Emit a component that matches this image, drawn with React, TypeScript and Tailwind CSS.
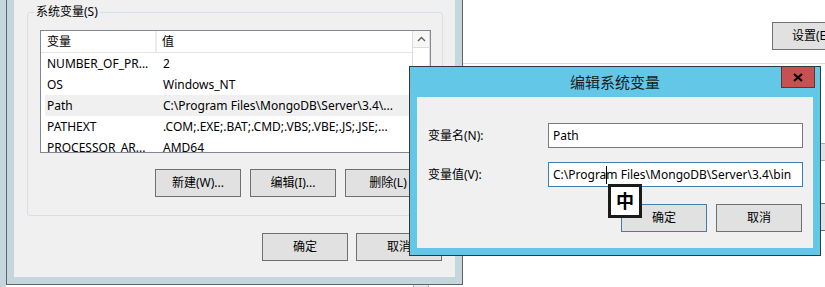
const font = "font-['Noto_Sans','Noto_Sans_CJK_SC',sans-serif]";

const rows = [
  { name: "NUMBER_OF_PR...", value: "2" },
  { name: "OS", value: "Windows_NT" },
  { name: "Path", value: "C:\\Program Files\\MongoDB\\Server\\3.4\\...", selected: true },
  { name: "PATHEXT", value: ".COM;.EXE;.BAT;.CMD;.VBS;.VBE;.JS;.JSE;..." },
  { name: "PROCESSOR_AR...", value: "AMD64" },
];

function WinButton({ label, primary }: { label: string; primary?: boolean }) {
  return (
    <div
      className={`flex h-[28px] w-[86px] shrink-0 items-center justify-center border bg-[#e1e1e1] text-[12px] text-black ${
        primary ? "border-[#3c7fb1]" : "border-[#707070]"
      }`}
    >
      {label}
    </div>
  );
}

function EnvList() {
  return (
    <div className="flex h-[123px] border border-[#828790] bg-white overflow-hidden">
      <div className="flex flex-1 flex-col">
        <div className="flex h-[22px] shrink-0 border-b border-[#e5e5e5]">
          <div className="flex w-[116px] items-center border-r-2 border-[#ececec] pl-[6px]">变量</div>
          <div className="flex items-center pl-[5px]">值</div>
        </div>
        {rows.map((r) => (
          <div key={r.name} className="flex h-[21px] shrink-0 pl-[4px]">
            <div className={`flex flex-1 items-center ${r.selected ? "bg-[#f0f0f0]" : ""}`}>
              <div className="w-[118px] shrink-0 pl-[2px] whitespace-nowrap">{r.name}</div>
              <div className="whitespace-nowrap">{r.value}</div>
            </div>
          </div>
        ))}
      </div>
      <div className="flex w-[18px] shrink-0 flex-col border-l border-[#dcdcdc] border-r border-r-[#dcdcdc] bg-white">
        <div className="flex h-[17px] items-center justify-center border-b border-[#dcdcdc] bg-[#f7f7f7]">
          <svg width="9" height="6" viewBox="0 0 9 6">
            <polyline points="1,5 4.5,1.5 8,5" fill="none" stroke="#606060" strokeWidth="1.4" />
          </svg>
        </div>
      </div>
    </div>
  );
}

function EnvWindow() {
  return (
    <div className="absolute left-[6px] top-[-16px] h-[301px] w-[457px] border border-[#5f6468] bg-[#c6d6dd] p-[7px]">
      <div className="flex h-full flex-col bg-[#f0f0f0] pl-[13px] pr-[12px]">
        <div className="relative mt-[20px] flex h-[204px] flex-col rounded-[3px] border border-[#d5dfe5] pl-[12px] pr-[11px] pt-[17px]">
          <span className="absolute left-[6px] top-[-9px] bg-[#f0f0f0] px-[2px] leading-[16px]">系统变量(S)</span>
          <EnvList />
          <div className="mt-[16px] flex justify-end gap-[9px]">
            <WinButton label="新建(W)..." />
            <WinButton label="编辑(I)..." />
            <WinButton label="删除(L)" />
          </div>
        </div>
        <div className="mt-[17px] flex justify-end gap-[8px] pr-px">
          <WinButton label="确定" />
          <WinButton label="取消" />
        </div>
      </div>
    </div>
  );
}

function EditDialog() {
  return (
    <div className="absolute left-[409px] top-[66px] flex h-[190px] w-[412px] flex-col border border-[#2e3a40] bg-[#63c7e8] px-[7px] pb-[7px]">
      <div className="relative flex h-[30px] shrink-0 items-center justify-center">
        <span className="text-[15px] text-[#1b1b1b]">编辑系统变量</span>
        <div className="absolute right-[-2px] top-0 flex h-[21px] w-[34px] items-center justify-center border border-[#6b2f2f] border-t-0 bg-[#c75050]">
          <svg width="10" height="9" viewBox="0 0 10 9">
            <path d="M1 1 L9 8 M9 1 L1 8" stroke="#000" strokeWidth="2.2" />
          </svg>
        </div>
      </div>
      <div className="relative flex flex-1 flex-col bg-[#f0f0f0] pl-[11px] pr-[10px]">
        <div className="mt-[26px] flex items-center">
          <div className="w-[120px]">变量名(N):</div>
          <div className="flex h-[25px] w-[255px] items-center border border-[#7a7a7a] bg-white pl-[4px]">Path</div>
        </div>
        <div className="mt-[14px] flex items-center">
          <div className="w-[120px]">变量值(V):</div>
          <div className="flex h-[25px] w-[255px] items-center overflow-hidden whitespace-nowrap border border-[#3c7fb1] bg-white pl-[4px]">
            C:\Progra
            <span className="-mr-px inline-block h-[18px] w-px bg-black" />
            m Files\MongoDB\Server\3.4\bin
          </div>
        </div>
        <div className="mt-[17px] flex justify-end gap-[9px] pr-px">
          <WinButton label="确定" primary />
          <WinButton label="取消" />
        </div>
        <div className="absolute left-[191px] top-[87px] flex h-[34px] w-[34px] items-center justify-center border-[3px] border-[#1a1a1a] bg-white text-[18px] font-bold text-black">
          中
        </div>
      </div>
    </div>
  );
}

export default function App() {
  return (
    <div className={`relative h-[287px] w-[825px] overflow-hidden bg-white text-[12px] text-black ${font}`}>
      {/* system properties page behind */}
      <div className="absolute left-0 top-0 h-full w-[6px] bg-[#c6d6dd]" />
      <div className="absolute left-[462px] top-[63px] h-px w-[363px] bg-[#dadada]" />
      <div className="absolute left-[772px] top-[22px] flex h-[28px] w-[86px] items-center border border-[#707070] bg-[#e1e1e1] pl-[19px] text-[12px]">
        设置(E)
      </div>
      <div className="absolute left-[790px] top-[143px] h-[18px] w-[60px] border border-[#adadad] bg-[#e1e1e1]" />
      <div className="absolute left-[790px] top-[203px] h-[28px] w-[60px] border border-[#707070] bg-[#e1e1e1]" />
      <div className="absolute left-[413px] top-[284px] h-[10px] w-[16px] border border-[#adadad] bg-[#eaeaea]" />
      <EnvWindow />
      <EditDialog />
    </div>
  );
}
